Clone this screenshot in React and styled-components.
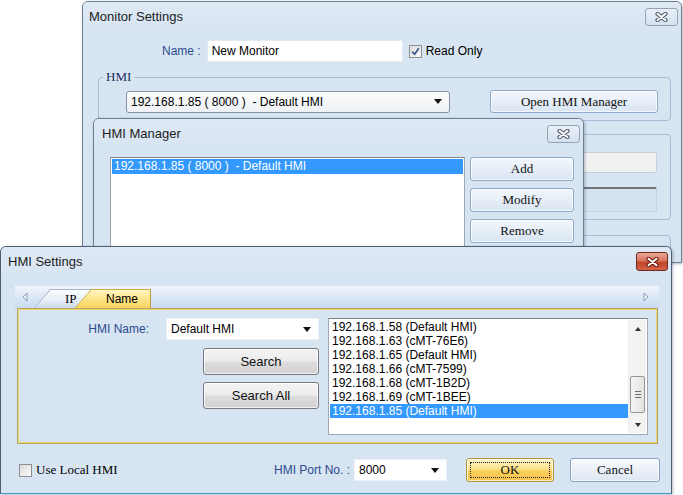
import React from 'react';
import styled, { createGlobalStyle } from 'styled-components';

const GlobalStyle = createGlobalStyle`
  html, body {
    margin: 0;
    padding: 0;
    background: #fff;
  }
  body {
    font-family: "Liberation Sans", Arial, sans-serif;
    font-size: 12px;
    color: #000;
  }
`;

const Desktop = styled.div`
  position: relative;
  width: 683px;
  height: 495px;
  overflow: hidden;
  background: #fff;
`;

// windows sit on a free desktop, so these are placed by coordinates
const Window = styled.div`
  position: absolute;
  left: ${p => p.$left}px;
  top: ${p => p.$top}px;
  width: ${p => p.$width}px;
  height: ${p => p.$height}px;
  box-sizing: border-box;
  display: flex;
  flex-direction: column;
  background: #d7e4f2;
  border: 1px solid ${p => (p.$active ? '#4a5d72' : '#6f7e8f')};
  border-bottom-color: ${p => (p.$active ? '#3a9cc4' : '#6f7e8f')};
  border-radius: 6px 6px 0 0;
  box-shadow: 1px 1px 3px rgba(40, 60, 90, 0.35);
`;

const TitleBar = styled.div`
  height: 29px;
  flex: none;
  display: flex;
  align-items: center;
  justify-content: space-between;
  padding: 0 3px 0 ${p => p.$pad || 6}px;
  background: linear-gradient(#dfe9f5, #d7e4f2);
  border-radius: 5px 5px 0 0;
`;

const Title = styled.span`
  font-size: 13px;
  color: #1c1c1c;
`;

const CloseButton = styled.div`
  width: ${p => (p.$red ? 32 : 33)}px;
  height: ${p => (p.$red ? 19 : 18)}px;
  box-sizing: border-box;
  display: flex;
  align-items: center;
  justify-content: center;
  border-radius: 3px;
  border: 1px solid ${p => (p.$red ? '#6d2a1e' : '#95a3b4')};
  background: ${p =>
    p.$red
      ? 'linear-gradient(#e9a797 0%, #d9775f 45%, #c04428 55%, #d2644a 100%)'
      : 'linear-gradient(#e9eff7, #d5e1ef)'};
`;

const CloseGlyph = ({ red }) => (
  <svg width="13" height="10" viewBox="0 0 13 10">
    <path d="M2.5 1.8 L10.5 8.2 M10.5 1.8 L2.5 8.2" stroke={red ? '#6b1d10' : '#56626f'} strokeWidth="4.2" strokeLinecap="round" />
    <path d="M2.5 1.8 L10.5 8.2 M10.5 1.8 L2.5 8.2" stroke="#fff" strokeWidth="2" strokeLinecap="round" />
  </svg>
);

const Body = styled.div`
  flex: 1;
  display: flex;
  flex-direction: column;
  padding: ${p => p.$pad};
  min-height: 0;
`;

const Row = styled.div`
  display: flex;
  align-items: center;
  gap: ${p => p.$gap || 0}px;
  padding-left: ${p => p.$indent || 0}px;
  margin-top: ${p => p.$top || 0}px;
`;

const FieldLabel = styled.span`
  color: #2b4c8f;
  font-size: 12px;
  white-space: pre;
`;

const TextBox = styled.div`
  box-sizing: border-box;
  width: ${p => p.$width}px;
  height: ${p => p.$height || 22}px;
  display: flex;
  align-items: center;
  padding-left: 4px;
  background: #fff;
  border: 1px solid #e3e9f1;
`;

const Check = styled.div`
  width: 13px;
  height: 13px;
  box-sizing: border-box;
  border: 1px solid #8e8f8f;
  background: linear-gradient(135deg, #dcdcdc, #fbfbfb);
  display: flex;
  align-items: center;
  justify-content: center;
`;

const CheckText = styled.span`
  font-family: ${p => (p.$serif ? '"Liberation Serif", "Times New Roman", serif' : 'inherit')};
  font-size: ${p => (p.$serif ? 13 : 12)}px;
  margin-left: 4px;
`;

const Tick = () => (
  <svg width="9" height="9" viewBox="0 0 9 9">
    <path d="M1.2 4.6 L3.6 7.2 L7.8 1.2" fill="none" stroke="#3a4f8c" strokeWidth="1.6" />
  </svg>
);

const Group = styled.fieldset`
  margin: ${p => p.$top || 0}px 0 0 0;
  padding: ${p => p.$pad || '0'};
  min-width: 0;
  border: 1px solid #a6bbd6;
  border-radius: 4px;
  display: flex;
  flex-direction: column;
  align-items: ${p => p.$align || 'stretch'};
`;

const Legend = styled.legend`
  margin-left: 4px;
  padding: 0 3px;
  line-height: 16px;
  font-family: "Liberation Serif", "Times New Roman", serif;
  font-size: 13px;
  color: #1d2f5c;
`;

const GroupRow = styled.div`
  display: flex;
  align-items: center;
  justify-content: space-between;
  padding: 5px 12px 7px 27px;
`;

const Combo = styled.div`
  box-sizing: border-box;
  width: ${p => p.$width}px;
  height: ${p => p.$height || 22}px;
  margin-left: ${p => p.$gapLeft || 0}px;
  display: flex;
  align-items: center;
  justify-content: space-between;
  padding: 0 7px 0 4px;
  white-space: pre;
  background: ${p => (p.$framed ? 'linear-gradient(#fbfcfd, #eef1f5)' : '#fff')};
  border: 1px solid ${p => (p.$framed ? '#8593a5' : '#eef2f7')};
  border-radius: ${p => (p.$framed ? 3 : 0)}px;
`;

const DropArrow = styled.span`
  width: 0;
  height: 0;
  border-left: 4px solid transparent;
  border-right: 4px solid transparent;
  border-top: 5px solid #111;
`;

const Button = styled.div`
  box-sizing: border-box;
  width: ${p => p.$width}px;
  height: ${p => p.$height || 24}px;
  margin-left: ${p => p.$gapLeft || 0}px;
  margin-top: ${p => p.$gapTop || 0}px;
  flex: none;
  display: flex;
  align-items: center;
  justify-content: center;
  border-radius: 3px;
  font-family: ${p => (p.$sans ? 'inherit' : '"Liberation Serif", "Times New Roman", serif')};
  font-size: 13px;
  color: #111;
  border: 1px solid
    ${p => ({ blue: '#90aacb', grey: '#7a7a7a', gold: '#b8953e', cancel: '#8aa2c2' }[p.$kind])};
  background: ${p =>
    ({
      blue: 'linear-gradient(#f3f7fc 0%, #e6eef8 50%, #d9e5f3 100%)',
      grey: 'linear-gradient(#f4f4f4 0%, #ececec 48%, #dddddd 52%, #d2d2d2 100%)',
      gold: 'linear-gradient(#fff4c4 0%, #fde38c 45%, #f9cf5a 55%, #f6c24a 100%)',
      cancel: 'linear-gradient(#f8fafd 0%, #eaf0f7 50%, #dde6f1 100%)',
    }[p.$kind])};
  box-shadow: inset 0 0 0 1px rgba(255, 255, 255, 0.7);
`;

const FocusRing = styled.span`
  flex: 1;
  align-self: stretch;
  margin: 3px;
  display: flex;
  align-items: center;
  justify-content: center;
  border: 1px dotted #222;
`;

const ButtonStack = styled.div`
  display: flex;
  flex-direction: column;
  gap: ${p => p.$gap}px;
`;

const ListBox = styled.div`
  box-sizing: border-box;
  width: ${p => p.$width}px;
  height: ${p => p.$height}px;
  flex: none;
  display: flex;
  background: #fff;
  border: 1px solid #a0a8b3;
  border-top-color: #7b838d;
  padding: 1px;
`;

const ListItems = styled.div`
  flex: 1;
  display: flex;
  flex-direction: column;
`;

const ListItem = styled.div`
  height: ${p => p.$h}px;
  line-height: ${p => p.$h}px;
  padding-left: 2px;
  white-space: pre;
  font-size: 12px;
  color: ${p => (p.$selected ? '#fff' : '#000')};
  background: ${p => (p.$selected ? '#3399ff' : 'transparent')};
`;

const ScrollBar = styled.div`
  width: 17px;
  flex: none;
  display: flex;
  flex-direction: column;
  justify-content: space-between;
  background: #f3f3f3;
  border-left: 1px solid #ececec;
`;

const ScrollArrow = styled.div`
  height: 17px;
  display: flex;
  align-items: center;
  justify-content: center;
  &::after {
    content: '';
    border-left: 3px solid transparent;
    border-right: 3px solid transparent;
    ${p => (p.$up ? 'border-bottom: 4px solid #333;' : 'border-top: 4px solid #333;')}
  }
`;

const Thumb = styled.div`
  height: 37px;
  margin: 0 1px 3px 1px;
  box-sizing: border-box;
  border: 1px solid #979797;
  border-radius: 2px;
  background: linear-gradient(90deg, #f5f5f5, #e2e2e2);
  display: flex;
  flex-direction: column;
  align-items: center;
  justify-content: center;
  gap: 2px;
`;

const Grip = styled.span`
  width: 6px;
  height: 1px;
  background: #6b6b6b;
`;

const Spacer = styled.div`
  flex: 1;
`;

const FlatField = styled.div`
  box-sizing: border-box;
  width: ${p => p.$width}px;
  height: ${p => p.$height}px;
  margin-top: ${p => p.$top || 0}px;
  background: ${p => (p.$sunken ? '#d5e2f0' : '#f1f1f1')};
  border: 1px solid ${p => (p.$sunken ? '#c4d2e3' : '#c9ced6')};
  border-top: ${p => (p.$sunken ? '2px solid #6f747b' : '1px solid #c9ced6')};
  border-radius: 2px;
`;

const TabStrip = styled.div`
  height: 22px;
  display: flex;
  align-items: flex-end;
  background: linear-gradient(#f1f6fd, #d9e6f6 55%, #c9daf0);
`;

const StripArrow = styled.div`
  width: ${p => p.$width}px;
  height: 22px;
  display: flex;
  align-items: center;
  justify-content: center;
`;

const Tab = styled.div`
  height: 19px;
  width: ${p => p.$width}px;
  margin-left: ${p => p.$offset || 0}px;
  box-sizing: border-box;
  display: flex;
  align-items: center;
  padding-left: ${p => p.$textPad}px;
  clip-path: polygon(0 100%, 16px 0, 100% 0, 100% 100%);
  border-top: 1px solid ${p => (p.$active ? '#c9a949' : '#a9b6c8')};
  border-right: 1px solid ${p => (p.$active ? '#b99a3c' : '#a9b6c8')};
  font-family: ${p => (p.$serif ? '"Liberation Serif", "Times New Roman", serif' : 'inherit')};
  font-size: ${p => (p.$serif ? 13 : 12)}px;
  background:
    linear-gradient(to bottom right, transparent calc(50% - 0.8px), ${p => (p.$active ? '#c9a949' : '#98a8be')} 50%, transparent calc(50% + 0.8px)) left top / 16px 100% no-repeat,
    ${p =>
      p.$active
        ? 'linear-gradient(#fff6c2, #fde589 50%, #f8d460)'
        : 'linear-gradient(#fbfdff, #e8eff8 55%, #cbd8ea)'};
  position: relative;
  z-index: ${p => (p.$active ? 2 : 1)};
`;

const Panel = styled.div`
  height: 136px;
  box-sizing: border-box;
  margin: 0 1px 0 2px;
  display: flex;
  gap: 9px;
  padding: 9px 9px 0 0;
  border: 1px solid #b3a56a;
  box-shadow: inset 0 0 0 1px #f0d46c;
`;

const LeftColumn = styled.div`
  flex: 1;
  display: flex;
  flex-direction: column;
  align-items: flex-end;
  gap: 7px;
`;

const BottomRow = styled.div`
  display: flex;
  align-items: center;
  margin: 14px -1px 0 0;
  padding-left: 4px;
`;

const Triangle = ({ dir }) => (
  <svg width="6" height="10" viewBox="0 0 6 10">
    <path d={dir === 'left' ? 'M5 1 L1 5 L5 9 Z' : 'M1 1 L5 5 L1 9 Z'} fill="#eef3fa" stroke="#8d9cb0" strokeWidth="1" />
  </svg>
);

const hosts = [
  ['192.168.1.58 (Default HMI)'],
  ['192.168.1.63 (cMT-76E6)'],
  ['192.168.1.65 (Default HMI)'],
  ['192.168.1.66 (cMT-7599)'],
  ['192.168.1.68 (cMT-1B2D)'],
  ['192.168.1.69 (cMT-1BEE)'],
  ['192.168.1.85 (Default HMI)', true],
];

export default function App() {
  return (
    <>
      <GlobalStyle />
      <Desktop>
        <Window $left={82} $top={1} $width={600} $height={262}>
          <TitleBar>
            <Title>Monitor Settings</Title>
            <CloseButton><CloseGlyph /></CloseButton>
          </TitleBar>
          <Body $pad="9px 10px 0 15px">
            <Row $indent={64} $gap={6}>
              <FieldLabel>Name :</FieldLabel>
              <TextBox $width={196}>New Monitor</TextBox>
              <Row>
                <Check><Tick /></Check>
                <CheckText>Read Only</CheckText>
              </Row>
            </Row>
            <Group $top={7}>
              <Legend>HMI</Legend>
              <GroupRow>
                <Combo $width={324} $framed>
                  {'192.168.1.85 ( 8000 )  - Default HMI'}
                  <DropArrow />
                </Combo>
                <Button $kind="blue" $width={168} $height={23}>Open HMI Manager</Button>
              </GroupRow>
            </Group>
            <Group $top={13} $pad="17px 13px 7px 0" $align="flex-end">
              <FlatField $width={320} $height={21} />
              <FlatField $width={320} $height={25} $top={14} $sunken />
            </Group>
            <Group $top={15} $pad="30px 0 0 0" />
          </Body>
        </Window>

        <Window $left={93} $top={118} $width={491} $height={140}>
          <TitleBar $pad={8}>
            <Title>HMI Manager</Title>
            <CloseButton><CloseGlyph /></CloseButton>
          </TitleBar>
          <Body $pad="9px 9px 0 16px">
            <Row $gap={5} style={{ alignItems: 'flex-start' }}>
              <ListBox $width={355} $height={120}>
                <ListItems>
                  <ListItem $h={15} $selected>{'192.168.1.85 ( 8000 )  - Default HMI'}</ListItem>
                </ListItems>
              </ListBox>
              <ButtonStack $gap={7}>
                <Button $kind="blue" $width={104}>Add</Button>
                <Button $kind="blue" $width={104}>Modify</Button>
                <Button $kind="blue" $width={104}>Remove</Button>
              </ButtonStack>
            </Row>
          </Body>
        </Window>

        <Window $left={0} $top={246} $width={672} $height={248} $active>
          <TitleBar $pad={7}>
            <Title>HMI Settings</Title>
            <CloseButton $red><CloseGlyph red /></CloseButton>
          </TitleBar>
          <Body $pad="10px 12px 0 14px">
            <TabStrip>
              <StripArrow $width={19}><Triangle dir="left" /></StripArrow>
              <Tab $width={57} $textPad={31} $serif>IP</Tab>
              <Tab $width={76} $offset={-16} $textPad={31} $active>Name</Tab>
              <Spacer />
              <StripArrow $width={26}><Triangle dir="right" /></StripArrow>
            </TabStrip>
            <Panel>
              <LeftColumn>
                <Row $gap={17}>
                  <FieldLabel>HMI Name:</FieldLabel>
                  <Combo $width={153} $height={22}>
                    Default HMI
                    <DropArrow />
                  </Combo>
                </Row>
                <Button $kind="grey" $sans $width={116} $height={27} $gapTop={1}>Search</Button>
                <Button $kind="grey" $sans $width={116} $height={27}>Search All</Button>
              </LeftColumn>
              <ListBox $width={320} $height={117}>
                <ListItems>
                  {hosts.map(([text, sel]) => (
                    <ListItem key={text} $h={14} $selected={sel}>{text}</ListItem>
                  ))}
                </ListItems>
                <ScrollBar>
                  <ScrollArrow $up />
                  <Spacer />
                  <Thumb><Grip /><Grip /><Grip /></Thumb>
                  <ScrollArrow />
                </ScrollBar>
              </ListBox>
            </Panel>
            <BottomRow>
              <Check />
              <CheckText $serif>Use Local HMI</CheckText>
              <Spacer />
              <FieldLabel>HMI Port No. :</FieldLabel>
              <Combo $width={93} $height={22} $gapLeft={4}>
                8000
                <DropArrow />
              </Combo>
              <Button $kind="gold" $width={88} $gapLeft={19}>
                <FocusRing>OK</FocusRing>
              </Button>
              <Button $kind="cancel" $width={90} $gapLeft={16}>Cancel</Button>
            </BottomRow>
          </Body>
        </Window>
      </Desktop>
    </>
  );
}
